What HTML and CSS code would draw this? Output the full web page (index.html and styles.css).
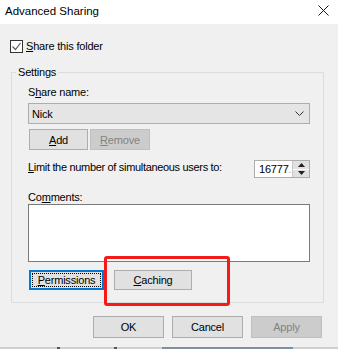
FILE: index.html
```html
<!DOCTYPE html>
<html>
<head>
<meta charset="utf-8">
<link rel="stylesheet" href="styles.css">
</head>
<body>
<div class="window">
  <div class="titlebar">
    <span class="title">Advanced Sharing</span>
    <svg class="close" width="11" height="11" viewBox="0 0 11 11"><path d="M0.5 0.5 L10.5 10.5 M10.5 0.5 L0.5 10.5" stroke="#1a1a1a" stroke-width="1" fill="none"/></svg>
  </div>
  <div class="content">
    <label class="check-row">
      <span class="checkbox"><svg width="11" height="11" viewBox="0 0 11 11"><path d="M1.5 5.5 L4.5 8.5 L9.5 2" stroke="#5a5a5a" stroke-width="1.2" fill="none"/></svg></span>
      <span class="label"><u>S</u>hare this folder</span>
    </label>
    <fieldset class="group">
      <legend class="legend">Settings</legend>
      <div class="group-inner">
        <div class="field-label">S<u>h</u>are name:</div>
        <div class="combo"><span>Nick</span><svg width="9" height="5" viewBox="0 0 9 5"><path d="M0.5 0.5 L4.5 4.5 L8.5 0.5" stroke="#333" stroke-width="1" fill="none"/></svg></div>
        <div class="btn-row small">
          <div class="btn add"><u>A</u>dd</div>
          <div class="btn disabled remove"><u>R</u>emove</div>
        </div>
        <div class="limit-row">
          <span class="limit-text"><u>L</u>imit the number of simultaneous users to:</span>
          <div class="spin">
            <div class="spin-text">16777<span class="cut">.</span></div>
            <div class="spin-btns">
              <div class="spin-btn"><svg width="7" height="4" viewBox="0 0 7 4"><path d="M0 4 L3.5 0 L7 4 Z" fill="#222"/></svg></div>
              <div class="spin-btn"><svg width="7" height="4" viewBox="0 0 7 4"><path d="M0 0 L3.5 4 L7 0 Z" fill="#222"/></svg></div>
            </div>
          </div>
        </div>
        <div class="field-label comments">Co<u>m</u>ments:</div>
        <div class="textarea"></div>
        <div class="btn-row perm-row">
          <div class="btn focused perm"><span class="focus-ring"><u>P</u>ermissions</span></div>
          <div class="btn caching"><u>C</u>aching</div>
        </div>
      </div>
    </fieldset>
    <div class="footer">
      <div class="btn big">OK</div>
      <div class="btn big">Cancel</div>
      <div class="btn big disabled">Apply</div>
    </div>
    <div class="annotation"></div>
  </div>
  <div class="bottom-strip">
    <span class="mark m1"></span><span class="mark m2"></span><span class="mark m3"></span>
  </div>
</div>
</body>
</html>
```

FILE: styles.css
```css
* { box-sizing: border-box; }
html, body { margin: 0; padding: 0; }
body {
  width: 338px;
  height: 353px;
  overflow: hidden;
  background: #ffffff;
  font-family: "Segoe UI", "Liberation Sans", Arial, sans-serif;
  font-size: 11px;
  letter-spacing: -0.2px;
  color: #000;
}
u { text-decoration: underline; text-underline-offset: 1px; }
.window { width: 338px; }
.titlebar {
  height: 24px;
  background: #fff;
  display: flex;
  align-items: center;
  justify-content: space-between;
  padding: 0 9px 0 5px;
}
.title { font-size: 11.5px; line-height: 16px; margin-top: -3px; letter-spacing: 0; }
.close { margin-top: -4px; }
.content {
  position: relative;
  background: #f0f0f0;
  height: 323px;
  padding-top: 16px;
}
.check-row {
  display: flex;
  align-items: center;
  height: 13px;
  margin-left: 10px;
}
.checkbox {
  width: 13px;
  height: 13px;
  border: 1px solid #333;
  background: #fff;
  display: flex;
  align-items: center;
  justify-content: center;
}
.check-row .label { margin-left: 3px; line-height: 15px; }
.group {
  margin: 12px 14px 0 11px;
  padding: 0;
  border: 1px solid #dcdcdc;
  min-width: 0;
}
.legend {
  margin-left: 4px;
  padding: 0 2px;
  line-height: 14px;
}
.group-inner {
  padding: 6px 13px 12px 16px;
}
.field-label { line-height: 15px; }
.combo {
  margin-top: 3px;
  height: 21px;
  background: #e5e5e5;
  border: 1px solid #adadad;
  display: flex;
  align-items: center;
  justify-content: space-between;
  padding: 0 5px 0 3px;
}
.btn {
  background: #e1e1e1;
  border: 1px solid #adadad;
  display: flex;
  align-items: center;
  justify-content: center;
  white-space: nowrap;
}
.btn.disabled {
  background: #cccccc;
  border-color: #bfbfbf;
  color: #838383;
}
.btn-row { display: flex; }
.btn-row.small { margin-top: 5px; padding-left: 1px; gap: 2px; }
.btn-row.small .btn { height: 21px; }
.add { width: 59px; }
.remove { width: 60px; }
.limit-row {
  margin-top: 10px;
  display: flex;
  align-items: center;
  justify-content: space-between;
}
.limit-text { white-space: nowrap; margin-top: -4px; letter-spacing: -0.32px; }
.spin {
  width: 56px;
  height: 18px;
  border: 1px solid #adadad;
  background: #fff;
  display: flex;
}
.spin-text {
  flex: 1;
  padding-left: 4px;
  line-height: 16px;
  overflow: hidden;
  white-space: nowrap;
}
.cut { color: #e0a040; }
.spin-btns {
  width: 17px;
  display: flex;
  flex-direction: column;
  border-left: 1px solid #c8c8c8;
  gap: 1px;
  background: #fff;
}
.spin-btn {
  flex: 1;
  background: #e1e1e1;
  display: flex;
  align-items: center;
  justify-content: center;
}
.comments { margin-top: 12px; line-height: 14px; }
.textarea {
  height: 58px;
  background: #fff;
  border: 1px solid #7a7a7a;
}
.perm-row { margin-top: 8px; padding-left: 1px; gap: 10px; }
.perm-row .btn { height: 20px; }
.perm {
  width: 75px;
  border: 1px solid #0078d7;
  box-shadow: inset 0 0 0 1px #0078d7;
  padding: 2px;
}
.focus-ring {
  flex: 1;
  align-self: stretch;
  border: 1px dotted #000;
  display: flex;
  align-items: center;
  justify-content: center;
}
.caching { width: 78px; }
.footer {
  margin-top: 13px;
  display: flex;
  justify-content: flex-end;
  gap: 8px;
  padding-right: 16px;
}
.btn.big { width: 71px; height: 22px; }
.annotation {
  position: absolute;
  left: 104px;
  top: 232px;
  width: 126px;
  height: 50px;
  border: 3px solid #f51a1a;
  border-radius: 3px;
}
.bottom-strip {
  position: relative;
  height: 6px;
  border-top: 2px solid #cfcfcf;
  background: #fff;
}
.mark { position: absolute; top: -2px; height: 2px; }
.m1 { left: 57px; width: 3px; background: #555; }
.m2 { left: 114px; width: 3px; background: #555; }
.m3 { left: 162px; width: 131px; background: #7d8fa3; }
```
